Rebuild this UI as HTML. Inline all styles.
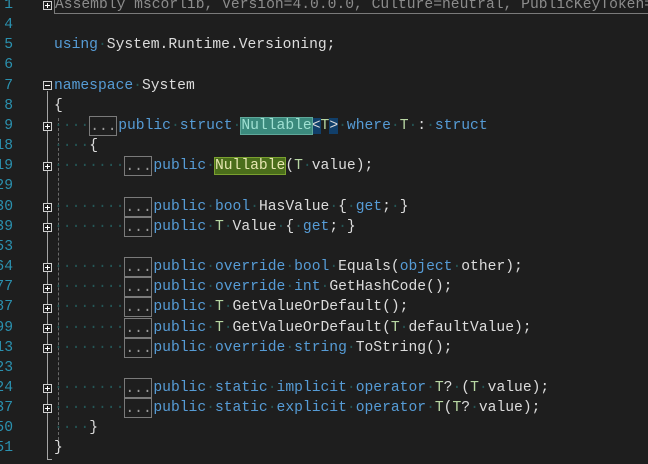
<!DOCTYPE html>
<html><head><style>
html,body{margin:0;padding:0;background:#1e1e1e;width:648px;height:464px;overflow:hidden;position:relative}
.code{position:absolute;left:54px;top:-5px;width:594px;font-family:"Liberation Mono",monospace;font-size:14.67px;line-height:20.17px;color:#dcdcdc}
.ln{position:absolute;left:0;width:13px;top:-5px;font-family:"Liberation Mono",monospace;font-size:14.67px;line-height:20.17px;color:#2b91af;text-align:right;direction:rtl;overflow:hidden}
.ln .row{direction:ltr;white-space:nowrap;display:flex;justify-content:flex-end}
.row{height:20.17px;white-space:pre;overflow:hidden}
.k{color:#569cd6}.t{color:#b8d7a3}
i{font-style:normal;color:#245656}
.b{display:inline-block;border:1px solid #7a7a7a;height:18px;line-height:20px;vertical-align:top;width:26px;color:#9a9a9a;margin-right:1px}
.hl{background:#3b8a7d;outline:1px solid #5fa89a;color:#9fe0d2}
.bl{background:#113f6a}
.gr{background:#4b6e1b;outline:1px solid #7aa02f;color:#e6e6b0}
.asm{color:#8c8c8c;border:1px solid #7a7a7a;border-top:none;padding-right:40px}
.pb{position:absolute;left:43px;width:7px;height:7px;border:1px solid #d0d0d0;background:#1e1e1e}
.pb:before{content:"";position:absolute;left:1px;top:3px;width:5px;height:1px;background:#fff}
.pb.p:after{content:"";position:absolute;left:3px;top:1px;width:1px;height:5px;background:#fff}
</style></head><body>
<div class="ln"><div class="row">1</div><div class="row">4</div><div class="row">5</div><div class="row">6</div><div class="row">7</div><div class="row">8</div><div class="row">9</div><div class="row">18</div><div class="row">19</div><div class="row">29</div><div class="row">30</div><div class="row">39</div><div class="row">53</div><div class="row">64</div><div class="row">77</div><div class="row">87</div><div class="row">99</div><div class="row">113</div><div class="row">123</div><div class="row">124</div><div class="row">137</div><div class="row">150</div><div class="row">151</div></div>
<div style="position:absolute;left:47px;top:91px;width:1px;height:369px;background:#a5a5a5"></div>
<div style="position:absolute;left:47px;top:459px;width:5px;height:1px;background:#a5a5a5"></div>
<div style="position:absolute;left:58px;top:118px;width:0;height:322px;border-left:1px dashed #6a6a6a"></div>
<div class="pb p" style="top:1px"></div>
<div class="pb" style="top:81px"></div>
<div class="pb p" style="top:122px"></div>
<div class="pb p" style="top:162px"></div>
<div class="pb p" style="top:203px"></div>
<div class="pb p" style="top:223px"></div>
<div class="pb p" style="top:263px"></div>
<div class="pb p" style="top:284px"></div>
<div class="pb p" style="top:304px"></div>
<div class="pb p" style="top:324px"></div>
<div class="pb p" style="top:344px"></div>
<div class="pb p" style="top:384px"></div>
<div class="pb p" style="top:404px"></div>
<div class="code"><div class="row"><span class="asm">Assembly mscorlib, Version=4.0.0.0, Culture=neutral, PublicKeyToken=b77a5c561934e089</span></div><div class="row"></div><div class="row"><span class="k">using</span><i>·</i>System.Runtime.Versioning;</div><div class="row"></div><div class="row"><span class="k">namespace</span><i>·</i>System</div><div class="row">{</div><div class="row"><i>····</i><span class="b">...</span><span class="k">public</span><i>·</i><span class="k">struct</span><i>·</i><span class="hl">Nullable</span><span class="bl">&lt;</span><span class="t">T</span><span class="bl">&gt;</span><i>·</i><span class="k">where</span><i>·</i><span class="t">T</span><i>·</i>:<i>·</i><span class="k">struct</span></div><div class="row"><i>····</i>{</div><div class="row"><i>········</i><span class="b">...</span><span class="k">public</span><i>·</i><span class="gr">Nullable</span>(<span class="t">T</span><i>·</i>value);</div><div class="row"></div><div class="row"><i>········</i><span class="b">...</span><span class="k">public</span><i>·</i><span class="k">bool</span><i>·</i>HasValue<i>·</i>{<i>·</i><span class="k">get</span>;<i>·</i>}</div><div class="row"><i>········</i><span class="b">...</span><span class="k">public</span><i>·</i><span class="t">T</span><i>·</i>Value<i>·</i>{<i>·</i><span class="k">get</span>;<i>·</i>}</div><div class="row"></div><div class="row"><i>········</i><span class="b">...</span><span class="k">public</span><i>·</i><span class="k">override</span><i>·</i><span class="k">bool</span><i>·</i>Equals(<span class="k">object</span><i>·</i>other);</div><div class="row"><i>········</i><span class="b">...</span><span class="k">public</span><i>·</i><span class="k">override</span><i>·</i><span class="k">int</span><i>·</i>GetHashCode();</div><div class="row"><i>········</i><span class="b">...</span><span class="k">public</span><i>·</i><span class="t">T</span><i>·</i>GetValueOrDefault();</div><div class="row"><i>········</i><span class="b">...</span><span class="k">public</span><i>·</i><span class="t">T</span><i>·</i>GetValueOrDefault(<span class="t">T</span><i>·</i>defaultValue);</div><div class="row"><i>········</i><span class="b">...</span><span class="k">public</span><i>·</i><span class="k">override</span><i>·</i><span class="k">string</span><i>·</i>ToString();</div><div class="row"></div><div class="row"><i>········</i><span class="b">...</span><span class="k">public</span><i>·</i><span class="k">static</span><i>·</i><span class="k">implicit</span><i>·</i><span class="k">operator</span><i>·</i><span class="t">T</span>?<i>·</i>(<span class="t">T</span><i>·</i>value);</div><div class="row"><i>········</i><span class="b">...</span><span class="k">public</span><i>·</i><span class="k">static</span><i>·</i><span class="k">explicit</span><i>·</i><span class="k">operator</span><i>·</i><span class="t">T</span>(<span class="t">T</span>?<i>·</i>value);</div><div class="row"><i>····</i>}</div><div class="row">}</div></div>
</body></html>
